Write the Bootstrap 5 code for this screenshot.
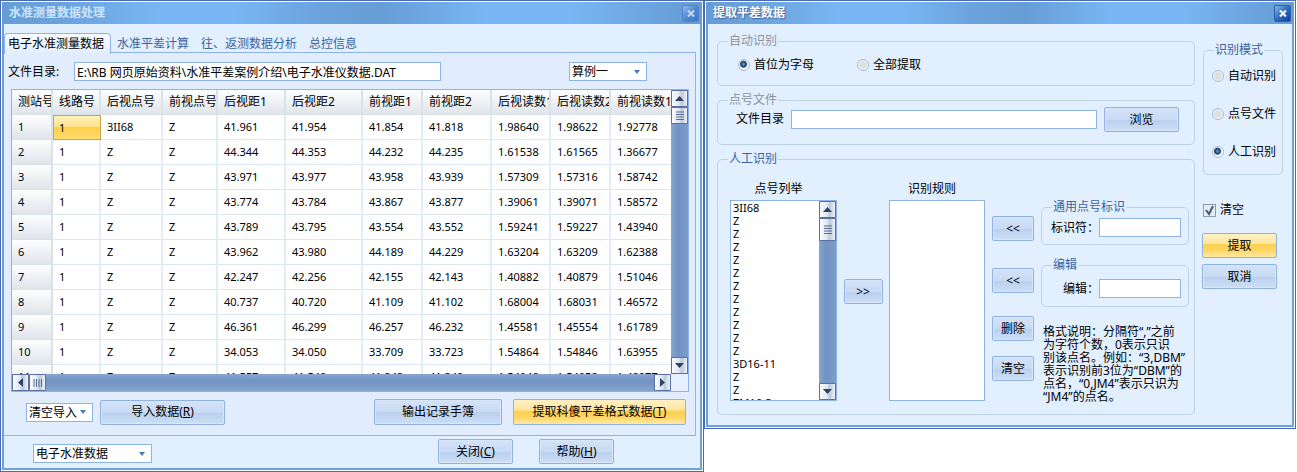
<!DOCTYPE html>
<html lang="zh-CN">
<head>
<meta charset="utf-8">
<meta name="viewport" content="width=device-width, initial-scale=1">
<title>水准测量数据处理</title>
<link href="https://cdn.jsdelivr.net/npm/bootstrap@5.3.0/dist/css/bootstrap.min.css" rel="stylesheet">
<style>
:root{--edge:#4a69b3;--frame:#6ba1dc;--line:#8fb3e6;--group:#bcd2e0;--ink:#3b639c}
body{font-family:"Noto Sans","Noto Sans CJK SC",sans-serif;font-size:12px;line-height:14px;color:#000;background:#fff}
.desk{display:grid;grid-template-columns:704fr 592fr;padding-right:1px;align-items:start}
.win{border:1px solid var(--edge);background:#fff;padding:1px}
.win-title{height:22px;padding:0 3px 0 7px;font-weight:700;color:#fff;text-shadow:1px 1px 1px #44619a;
 background:linear-gradient(90deg,#669dd5 0,#6aa2db 8%,#78b6f5 23%,#78b6f5 33%,#6aa2db 46%,#669dd5 54%,#78b6f5 69%,#78b6f5 81%,#669dd5 98%)}
.win-title.idle{color:#cfe4fb;text-shadow:none}
.win-body{border:2px solid var(--frame);border-top:0;background:#e1efff}
.close-btn{width:17px;height:17px;padding:0;border:1px solid #2b60ae;border-radius:2px;background:linear-gradient(135deg,#8bb8e8,#2f6cbb 50%,#0c3c94);display:flex;align-items:center;justify-content:center}
.idle .close-btn{border-color:#4c84cd;background:linear-gradient(135deg,#8dbdf0,#5288d0 50%,#4278c4)}
.tabs{padding-top:9px;border:0;position:relative;z-index:1;margin-bottom:-1px}
.tabs .nav-link{height:21px;padding:3px 6px;line-height:15px;border:0;color:var(--ink);background:none}
.tabs .nav-link.active{padding:3px 6px 3px 3px;color:#000;border:1px solid var(--line);border-bottom:0;border-radius:4px 4px 0 0;background:linear-gradient(#fafcff,#e1edfc);line-height:14px}
.pane{border:1px solid var(--line);border-left:0;margin-right:4px;padding:9px 6px 10px 7px;background:#e1edfc}
.field{height:19px;min-width:0;padding:0 2px;border:1px solid var(--line);border-radius:0;background:#fff;color:#000;font-size:12px;line-height:17px}
select.pick{appearance:none;background:#fff url("data:image/svg+xml,%3Csvg xmlns='http://www.w3.org/2000/svg' width='6' height='4'%3E%3Cpath d='M0 0h6L3 4z' fill='%23457ab5'/%3E%3C/svg%3E") no-repeat right 6px center}
.cmd{height:25px;padding:0 4px;border:1px solid #91b1e0;border-radius:2px;font-size:12px;line-height:14px;color:#000;background:linear-gradient(#d3e2f7 0,#c8dbf4 50%,#b9cfec 51%,#cddff6 100%);box-shadow:inset 0 0 0 1px #d9e6f8}
.cmd:hover{color:#000;background:#cddff6}
.cmd.hot{background:linear-gradient(#fff0c4 0,#ffe6a0 42%,#ffcf4d 46%,#ffd768 75%,#ffeaa6 100%);box-shadow:none}
.tall{height:26px}
.w-75px{width:75px}
.path-label{width:56px;margin-left:-3px;margin-right:10px;white-space:nowrap}
.path{flex:0 1 367px}
.sample{width:78px;margin-right:42px}
/* data grid */
.sheet{border:1px solid var(--line);display:grid;grid-template-columns:1fr 17px;grid-template-rows:284px 17px;background:#e6f0fd}
.sheet-view{overflow:hidden;background:#fff}
.sheet table{table-layout:fixed;width:100%;min-width:659px;border-collapse:separate;border-spacing:0;margin:0}
.sheet th,.sheet td{height:25px;padding:0 0 0 6px;border-right:2px solid #e2ecfa;border-bottom:1px solid #d9e7f8;overflow:hidden;white-space:nowrap;font-size:11px;line-height:22px;font-weight:400}
.sheet th{background:linear-gradient(#fdfefe,#e0e5ea);border-color:#d7e2e9}
.sheet thead th{font-size:12px}
.sheet th:last-child,.sheet td:last-child{border-right:0}
.sheet td.cur{background:linear-gradient(#fff0bd,#ffe38d 45%,#ffd14c 50%,#ffdc70);border:1px solid #c9a44a;padding-left:5px;line-height:20px}
.c0{width:41px}.c1{width:48px}.c2{width:62px}.c3{width:55px}.c4{width:68px}.c5{width:77px}.c6{width:60px}.c7{width:69px}.c8{width:59px}.c9{width:60px}
/* scroll bars */
.sb{display:flex;background:linear-gradient(90deg,#88a6d0,#7193c2 40%,#7c9cc9)}
.sb-v{flex-direction:column;width:17px}
.sb-h{background:linear-gradient(#88a6d0,#7193c2 40%,#86a4ce)}
.sb button{width:17px;height:17px;padding:0;border:1px solid #5d6f9f;border-radius:1px;background:linear-gradient(90deg,#fafcfe,#e2e8f0 45%,#bccadd 65%,#eef2f7);display:flex;align-items:center;justify-content:center;flex:none}
.sb button.long{height:23px}
.import-row{padding:7px 3px 0 15px}
.mode{width:67px}.import{width:125px;margin-left:7px}.book{width:128px}.extract{width:173px;margin-left:11px}
.foot{padding:3px 86px 4px 29px;gap:26px}
.kind{width:119px;margin-top:5px}
/* option groups */
.dialog{padding:10px 9px;gap:8px}
fieldset.group{border:1px solid var(--group);border-radius:5px}
.mid,.low{margin-top:7px}
.group>legend{float:none;width:auto;margin:0 0 0 10px;padding:0 1px;font-size:12px;line-height:14px;height:14px;color:var(--ink)}
.group>legend.off{color:#8d9298}
.dial{appearance:none;width:12px;height:12px;margin:0;border:1px solid #a9bcd4;border-radius:50%;background:radial-gradient(#dcdedf 0 3px,#f4f6f8 5px);flex:none}
.dial:checked{background:radial-gradient(circle at 45% 42%,#6fa9d4 0,#2a5684 2px,#23436c 3px,#f4f6f8 4px)}
.tick{appearance:none;width:13px;height:13px;margin:0;border:1px solid #8a9db5;background:#eef1f4;flex:none}
.tick:checked{background:#e7ebef url("data:image/svg+xml,%3Csvg xmlns='http://www.w3.org/2000/svg' viewBox='0 0 11 11'%3E%3Cpath d='M2 5l3 4 4-8' fill='none' stroke='%233f5d80' stroke-width='2'/%3E%3C/svg%3E")}
.opt{display:flex;align-items:center;gap:4px}
.main-col{flex:1;min-width:0}
.side-col{width:80px;margin-top:9px}
.side-col .cmd{margin-left:-1px}
.auto-row{height:37px;padding:10px 20px 0}
.auto-row .opt{width:119px}
.file-row{height:37px;padding:0 15px 0 18px}
.file-row label{line-height:24px}
.file-row .field{flex:1;margin:3px 7px 0}
.file-row .cmd{margin-top:0}
.pick-area{padding:16px 5px 11px 12px}
.pick-area .heading{line-height:14px;margin-bottom:4px;padding-right:10px;text-align:center}
.list-frame{border:1px solid var(--line);background:#fff;height:201px;display:flex;overflow:hidden}
.list-frame select{flex:1;min-width:0;height:220px;margin-top:-1px;border:0;padding:0;overflow:hidden;outline:0;font-size:11px;background:#fff;color:#000}
.list-frame option{padding:0 2px;height:13px;min-height:13px;line-height:13px;font-size:11px;color:#000}
.points{width:107px}.rules{width:96px}
.col-move{width:39px;padding-top:97px}
.col-ops{width:42px;padding-top:34px;margin:0 7px}
.col-ops .cmd+.cmd{margin-top:27px}.col-ops .cmd.del{margin-top:23px}.col-ops .cmd.clr{margin-top:15px}
.col-tags{flex:0 0 148px;padding-top:18px}
.tag-group{height:45px;padding-right:7px}
.tag-group.edit{margin-top:13px;height:49px}
.tag-group .opt{justify-content:flex-end;gap:0;margin-top:4px}
.edit .opt{margin-top:7px}
.tag-group .field{width:82px}
.note{margin:18px 0 0 2px;line-height:13px;white-space:nowrap}
.modes{height:132px}
.modes .opt{margin:12px 0 24px 8px}
.modes .opt+.opt{margin-top:0}
.clear{margin:28px 0 16px}
.last{margin-top:6px}
</style>
</head>
<body>
<main class="desk">
<section class="win">
  <header class="win-title idle d-flex align-items-center justify-content-between"><span>水准测量数据处理</span>
    <button class="close-btn" aria-label="关闭窗口"><svg width="8" height="7" viewBox="0 0 8 7"><path d="M1 .5l6 6M7 .5l-6 6" stroke="#c5dcf4" stroke-width="2"/></svg></button></header>
  <div class="win-body">
    <nav class="nav nav-tabs tabs">
      <a class="nav-link active" href="#data">电子水准测量数据</a><a class="nav-link" href="#calc">水准平差计算</a><a class="nav-link" href="#both">往、返测数据分析</a><a class="nav-link" href="#info">总控信息</a>
    </nav>
    <div class="pane" id="data">
      <div class="d-flex align-items-center">
        <label class="path-label" for="path">文件目录:</label>
        <input class="field path" id="path" value="E:\RB 网页原始资料\水准平差案例介绍\电子水准仪数据.DAT">
        <select class="field pick sample ms-auto" aria-label="算例"><option>算例一</option></select>
      </div>
      <div class="sheet mt-2">
        <div class="sheet-view">
          <table>
            <colgroup><col class="c0"><col class="c1"><col class="c2"><col class="c3"><col class="c4"><col class="c5"><col class="c6"><col class="c7"><col class="c8"><col class="c9"><col></colgroup>
            <thead><tr><th>测站号</th><th>线路号</th><th>后视点号</th><th>前视点号</th><th>后视距1</th><th>后视距2</th><th>前视距1</th><th>前视距2</th><th>后视读数1</th><th>后视读数2</th><th>前视读数1</th></tr></thead>
            <tbody>
            <tr><th>1</th><td class="cur">1</td><td>3II68</td><td>Z</td><td>41.961</td><td>41.954</td><td>41.854</td><td>41.818</td><td>1.98640</td><td>1.98622</td><td>1.92778</td></tr>
            <tr><th>2</th><td>1</td><td>Z</td><td>Z</td><td>44.344</td><td>44.353</td><td>44.232</td><td>44.235</td><td>1.61538</td><td>1.61565</td><td>1.36677</td></tr>
            <tr><th>3</th><td>1</td><td>Z</td><td>Z</td><td>43.971</td><td>43.977</td><td>43.958</td><td>43.939</td><td>1.57309</td><td>1.57316</td><td>1.58742</td></tr>
            <tr><th>4</th><td>1</td><td>Z</td><td>Z</td><td>43.774</td><td>43.784</td><td>43.867</td><td>43.877</td><td>1.39061</td><td>1.39071</td><td>1.58572</td></tr>
            <tr><th>5</th><td>1</td><td>Z</td><td>Z</td><td>43.789</td><td>43.795</td><td>43.554</td><td>43.552</td><td>1.59241</td><td>1.59227</td><td>1.43940</td></tr>
            <tr><th>6</th><td>1</td><td>Z</td><td>Z</td><td>43.962</td><td>43.980</td><td>44.189</td><td>44.229</td><td>1.63204</td><td>1.63209</td><td>1.62388</td></tr>
            <tr><th>7</th><td>1</td><td>Z</td><td>Z</td><td>42.247</td><td>42.256</td><td>42.155</td><td>42.143</td><td>1.40882</td><td>1.40879</td><td>1.51046</td></tr>
            <tr><th>8</th><td>1</td><td>Z</td><td>Z</td><td>40.737</td><td>40.720</td><td>41.109</td><td>41.102</td><td>1.68004</td><td>1.68031</td><td>1.46572</td></tr>
            <tr><th>9</th><td>1</td><td>Z</td><td>Z</td><td>46.361</td><td>46.299</td><td>46.257</td><td>46.232</td><td>1.45581</td><td>1.45554</td><td>1.61789</td></tr>
            <tr><th>10</th><td>1</td><td>Z</td><td>Z</td><td>34.053</td><td>34.050</td><td>33.709</td><td>33.723</td><td>1.54864</td><td>1.54846</td><td>1.63955</td></tr>
            <tr><th>11</th><td>1</td><td>Z</td><td>Z</td><td>41.557</td><td>41.548</td><td>41.343</td><td>41.349</td><td>1.54048</td><td>1.54052</td><td>1.48977</td></tr>
            </tbody>
          </table>
        </div>
        <div class="sb sb-v">
          <button aria-label="向上"><svg width="9" height="5"><path d="M0 5h9L4.500 0z" fill="#323f66"/></svg></button>
          <button aria-label="垂直滑块"><svg width="8" height="9"><path d="M0 1h8M0 3.500h8M0 6h8M0 8.500h8" stroke="#556a92"/></svg></button>
          <button class="mt-auto" aria-label="向下"><svg width="9" height="5"><path d="M0 0h9L4.500 5z" fill="#323f66"/></svg></button>
        </div>
        <div class="sb sb-h">
          <button aria-label="向左"><svg width="5" height="9"><path d="M5 0v9L0 4.500z" fill="#323f66"/></svg></button>
          <button aria-label="水平滑块"><svg width="9" height="8"><path d="M1 0v8M3.500 0v8M6 0v8M8.500 0v8" stroke="#556a92"/></svg></button>
          <button class="ms-auto" aria-label="向右"><svg width="5" height="9"><path d="M0 0v9L5 4.500z" fill="#323f66"/></svg></button>
        </div>
      </div>
      <div class="d-flex align-items-center import-row">
        <select class="field pick mode" aria-label="导入方式"><option>清空导入</option></select>
        <button class="btn cmd import">导入数据(<u>R</u>)</button>
        <button class="btn cmd tall book ms-auto">输出记录手簿</button>
        <button class="btn cmd tall hot extract">提取科傻平差格式数据(<u>T</u>)</button>
      </div>
    </div>
    <footer class="d-flex foot">
      <select class="field pick kind" aria-label="数据类型"><option>电子水准数据</option></select>
      <button class="btn cmd w-75px ms-auto">关闭(<u>C</u>)</button>
      <button class="btn cmd w-75px">帮助(<u>H</u>)</button>
    </footer>
  </div>
</section>

<section class="win">
  <header class="win-title d-flex align-items-center justify-content-between"><span>提取平差数据</span>
    <button class="close-btn" aria-label="关闭窗口"><svg width="8" height="7" viewBox="0 0 8 7"><path d="M1 .5l6 6M7 .5l-6 6" stroke="#fff" stroke-width="2"/></svg></button></header>
  <div class="win-body d-flex dialog">
    <div class="main-col">
      <fieldset class="group"><legend class="off">自动识别</legend>
        <div class="d-flex auto-row align-items-start">
          <label class="opt"><input class="dial" type="radio" name="auto" checked>首位为字母</label>
          <label class="opt"><input class="dial" type="radio" name="auto">全部提取</label>
        </div>
      </fieldset>
      <fieldset class="group mid"><legend class="off">点号文件</legend>
        <div class="d-flex file-row align-items-start">
          <label for="pointfile">文件目录</label><input class="field" id="pointfile"><button class="btn cmd w-75px">浏览</button>
        </div>
      </fieldset>
      <fieldset class="group low"><legend>人工识别</legend>
        <div class="d-flex pick-area">
          <div class="points"><label class="heading d-block" for="points">点号列举</label>
            <div class="list-frame">
              <select id="points" size="16"><option>3II68</option><option>Z</option><option>Z</option><option>Z</option><option>Z</option><option>Z</option><option>Z</option><option>Z</option><option>Z</option><option>Z</option><option>Z</option><option>Z</option><option>3D16-11</option><option>Z</option><option>Z</option><option>ZM16-3</option></select>
              <div class="sb sb-v">
                <button aria-label="向上"><svg width="9" height="5"><path d="M0 5h9L4.500 0z" fill="#323f66"/></svg></button>
                <button class="long" aria-label="滑块"><svg width="8" height="9"><path d="M0 1h8M0 3.500h8M0 6h8M0 8.500h8" stroke="#556a92"/></svg></button>
                <button class="mt-auto" aria-label="向下"><svg width="9" height="5"><path d="M0 0h9L4.500 5z" fill="#323f66"/></svg></button>
              </div>
            </div>
          </div>
          <div class="col-move mx-auto"><button class="btn cmd w-100">&gt;&gt;</button></div>
          <div class="rules"><label class="heading d-block" for="rules">识别规则</label>
            <div class="list-frame"><select id="rules" size="16"></select></div></div>
          <div class="col-ops"><button class="btn cmd w-100">&lt;&lt;</button><button class="btn cmd w-100">&lt;&lt;</button><button class="btn cmd w-100 del">删除</button><button class="btn cmd w-100 clr">清空</button></div>
          <div class="col-tags">
            <fieldset class="group tag-group"><legend>通用点号标识</legend><div class="opt"><label for="tag">标识符：</label><input class="field" id="tag"></div></fieldset>
            <fieldset class="group tag-group edit"><legend>编辑</legend><div class="opt"><label for="edit">编辑：</label><input class="field" id="edit"></div></fieldset>
            <p class="note">格式说明：分隔符“,”之前<br>为字符个数，0表示只识<br>别该点名。例如：“3,DBM”<br>表示识别前3位为“DBM”的<br>点名，“0,JM4”表示只识为<br>“JM4”的点名。</p>
          </div>
        </div>
      </fieldset>
    </div>
    <div class="side-col">
      <fieldset class="group modes"><legend>识别模式</legend>
        <label class="opt"><input class="dial" type="radio" name="mode">自动识别</label>
        <label class="opt"><input class="dial" type="radio" name="mode">点号文件</label>
        <label class="opt"><input class="dial" type="radio" name="mode" checked>人工识别</label>
      </fieldset>
      <label class="opt clear"><input class="tick" type="checkbox" checked>清空</label>
      <button class="btn cmd hot w-75px d-block">提取</button>
      <button class="btn cmd w-75px d-block last">取消</button>
    </div>
  </div>
</section>
</main>
<script src="https://cdn.jsdelivr.net/npm/bootstrap@5.3.0/dist/js/bootstrap.bundle.min.js"></script>
</body>
</html>
